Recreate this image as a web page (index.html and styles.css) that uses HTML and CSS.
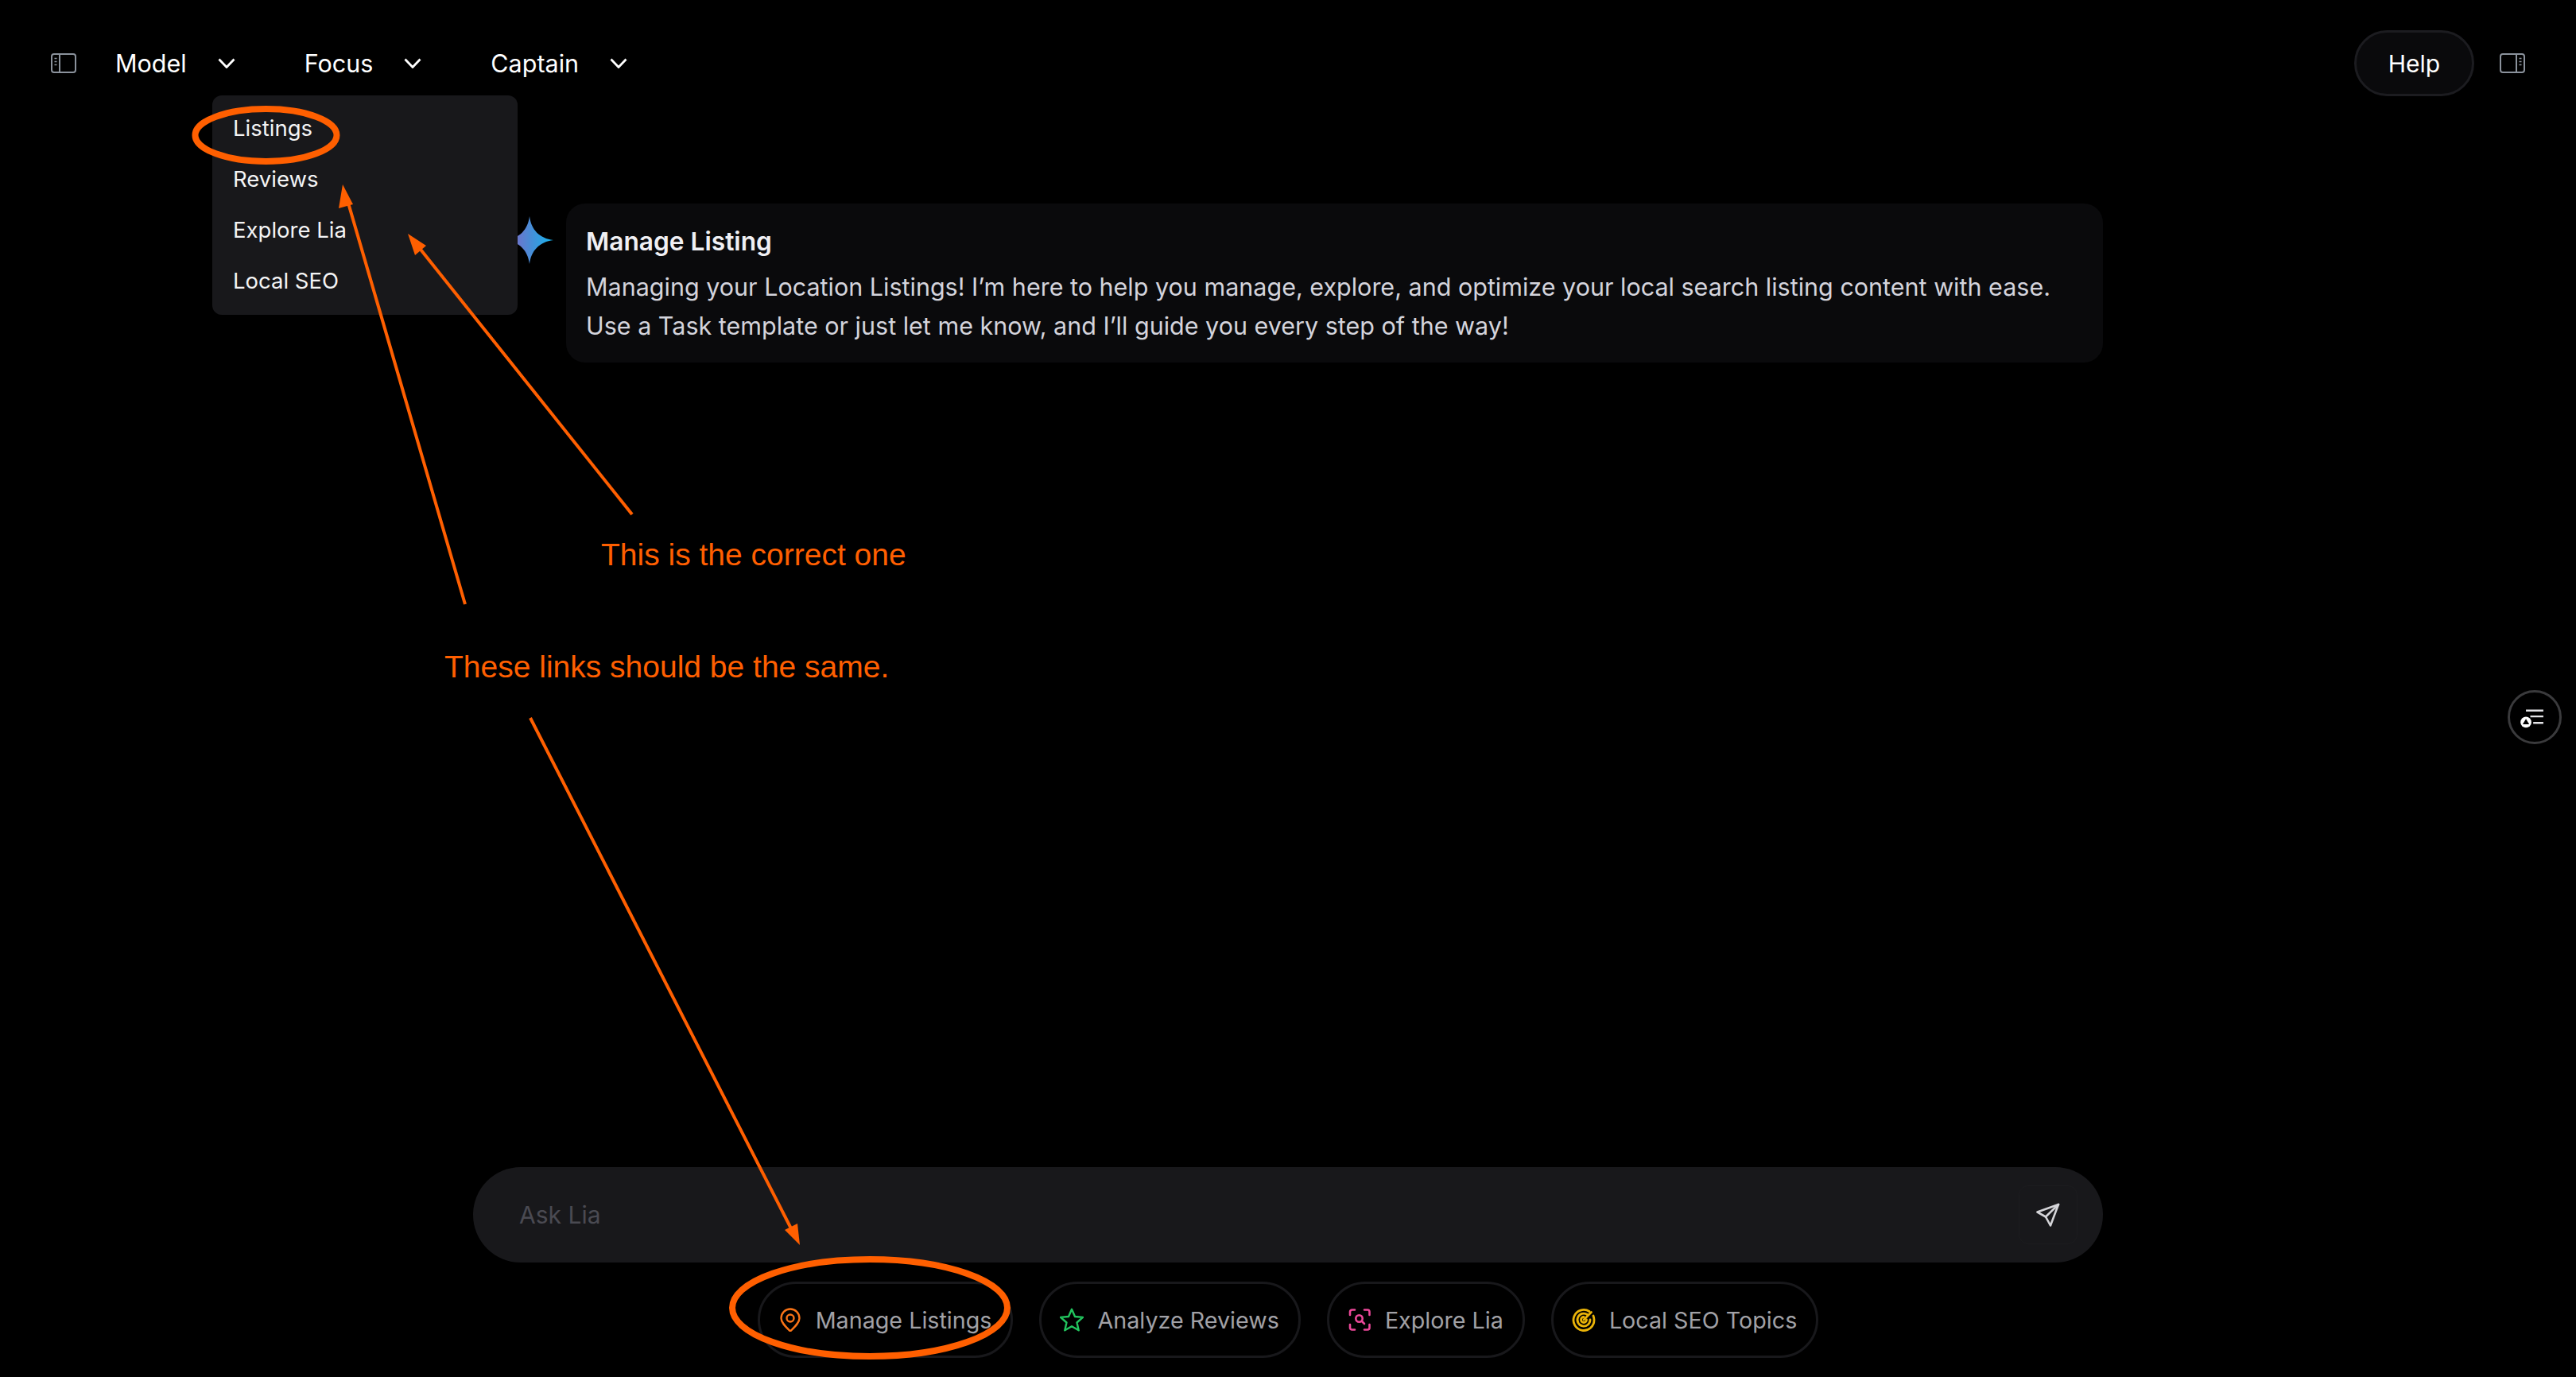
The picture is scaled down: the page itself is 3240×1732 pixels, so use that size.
FILE: index.html
```html
<!DOCTYPE html>
<html lang="en">
<head>
<meta charset="utf-8">
<title>Lia</title>
<link rel="stylesheet" href="styles.css">
</head>
<body>
<div class="page">
  <header class="topbar">
    <svg class="panel-icon" viewBox="0 0 32 25" fill="none" stroke="currentColor" stroke-width="2"><rect x="1" y="1" width="30" height="23" rx="3"/><path d="M11 1v23"/><path d="M4.5 6.5h3M4.5 10.5h3M4.5 14.500h3" stroke-width="1.600"/></svg>
    <nav class="nav">
      <a class="nav-item">Model<svg class="chev" viewBox="0 0 22 13" fill="none" stroke="currentColor" stroke-width="2.800"><path d="M1.500 1.500 11 11.500l9.500-10"/></svg></a>
      <a class="nav-item">Focus<svg class="chev" viewBox="0 0 22 13" fill="none" stroke="currentColor" stroke-width="2.800"><path d="M1.500 1.500 11 11.500l9.500-10"/></svg></a>
      <a class="nav-item">Captain<svg class="chev" viewBox="0 0 22 13" fill="none" stroke="currentColor" stroke-width="2.800"><path d="M1.500 1.500 11 11.500l9.500-10"/></svg></a>
    </nav>
    <div class="topbar-right">
      <button class="help">Help</button>
      <svg class="panel-icon" viewBox="0 0 32 25" fill="none" stroke="currentColor" stroke-width="2"><rect x="1" y="1" width="30" height="23" rx="3"/><path d="M21 1v23"/><path d="M24.500 6.500h3M24.500 10.500h3M24.500 14.500h3" stroke-width="1.600"/></svg>
    </div>
  </header>

  <main class="chat">
    <div class="message">
      <svg class="spark" viewBox="0 0 60 60"><defs><linearGradient id="sparkfill" x1="0" y1="0" x2="1" y2="0"><stop offset="0" stop-color="#8a62c4"/><stop offset="0.500" stop-color="#4b8bd6"/><stop offset="1" stop-color="#14b4ec"/></linearGradient></defs><path fill="url(#sparkfill)" d="M30 0C32 17 43 28 60 30 43 32 32 43 30 60 28 43 17 32 0 30 17 28 28 17 30 0Z"/></svg>
      <div class="bubble">
        <h2 class="bubble-title">Manage Listing</h2>
        <p class="bubble-text">Managing your Location Listings! I’m here to help you manage, explore, and optimize your local search listing content with ease.<br>Use a Task template or just let me know, and I’ll guide you every step of the way!</p>
      </div>
    </div>
  </main>

  <footer class="composer-wrap">
    <div class="composer">
      <span class="placeholder">Ask Lia</span>
      <button class="send"><svg viewBox="0 0 32 32" width="32" height="32" fill="none" stroke="#d4d4d8" stroke-width="2.600" stroke-linejoin="round" stroke-linecap="round"><path d="M29 3 2.500 12.500 13 18.500 19 29.500Z"/><path d="M29 3 13 18.500"/></svg></button>
    </div>
    <div class="chips">
      <a class="chip"><svg class="chip-icon" viewBox="0 0 30 30" fill="none" stroke="#f97316" stroke-width="2.400" stroke-linejoin="round"><path d="M15 29.500C9 23.500 3.500 18.500 3.500 13a11.500 11.500 0 0 1 23 0c0 5.500-5.500 10.500-11.500 16.500Z"/><circle cx="15" cy="13" r="4.500"/></svg>Manage Listings</a>
      <a class="chip"><svg class="chip-icon" viewBox="0 0 30 30" fill="none" stroke="#22c55e" stroke-width="2.400" stroke-linejoin="round"><path d="M15 1.800 19 11l10 .9-7.500 6.600 2.200 9.800L15 23.200 6.300 28.300l2.200-9.800L1 11.900 11 11Z"/></svg>Analyze Reviews</a>
      <a class="chip"><svg class="chip-icon" viewBox="0 0 30 30" fill="none" stroke="#ec4899" stroke-width="2.600" stroke-linecap="round"><path d="M3 9V5a2.500 2.500 0 0 1 2.500-2.500H9M21 2.500h4A2.500 2.500 0 0 1 27.500 5v4M27.500 21v4a2.500 2.500 0 0 1-2.500 2.500h-4M9 27.500H5.500A2.500 2.500 0 0 1 3 25v-4"/><circle cx="14.500" cy="13.500" r="4.200"/><path d="m18 17 3 3"/></svg>Explore Lia</a>
      <a class="chip"><svg class="chip-icon" viewBox="0 0 30 30" fill="none" stroke="#eab308" stroke-width="2.800" stroke-linecap="round"><path d="M22 4.500A13 13 0 1 0 28 15c0-2-.5-3.500-1-5"/><path d="M19.500 8.500A8 8 0 1 0 23 15"/><path d="M15 11.500a3.500 3.500 0 1 0 3.500 3.500"/><path d="M15 15 24.500 5.500"/></svg>Local SEO Topics</a>
    </div>
  </footer>

  <div class="menu">
    <a class="menu-item">Listings</a>
    <a class="menu-item">Reviews</a>
    <a class="menu-item">Explore Lia</a>
    <a class="menu-item">Local SEO</a>
  </div>

  <button class="side-fab">
    <svg viewBox="0 0 68 68" width="68" height="68"><path d="M22 25h24M28 33h18M32 42h14" stroke="#e4e4e7" stroke-width="2.600" fill="none"/><circle cx="22" cy="41" r="7.500" fill="#fff"/><path d="M22 36.500 26.500 44h-9Z" fill="#000"/></svg>
  </button>

  <svg class="marks" viewBox="0 0 3240 1732" fill="none" stroke="#ff5f00" stroke-width="4">
    <ellipse cx="334.500" cy="170" rx="89" ry="33" stroke-width="8"/>
    <ellipse cx="1094" cy="1645" rx="173" ry="61" stroke-width="8"/>
    <path d="M585 760 435 245"/>
    <path fill="#ff5f00" stroke="none" d="M431 232 444 257 426 262Z"/>
    <path d="M795 647 522 305"/>
    <path fill="#ff5f00" stroke="none" d="M513 294 536 309 522 321Z"/>
    <path d="M667 903 1000 1555"/>
    <path fill="#ff5f00" stroke="none" d="M1006 1566 987 1547 1003 1539Z"/>
  </svg>
  <div class="note note-correct">This is the correct one</div>
  <div class="note note-same">These links should be the same.</div>
</div>
</body>
</html>
```
FILE: styles.css
```css
* { box-sizing: border-box; }
html, body { margin: 0; height: 100%; background: #000; }
body { font-family: Inter, "Liberation Sans", sans-serif; color: #fff; overflow: hidden; }
a { display: block; }
button { font: inherit; }

.page { position: relative; width: 3240px; height: 1732px; display: flex; flex-direction: column; }

.topbar { display: flex; align-items: center; padding: 38px 64px 0; height: 121px; }
.panel-icon { width: 32px; height: 25px; color: #8b929c; flex: none; }
.nav { display: flex; align-items: center; margin-left: 49px; gap: 87px; }
.nav-item { display: flex; align-items: center; gap: 39px; font-size: 30.5px; line-height: 40px; color: #fff; }
.chev { width: 22px; height: 13px; }
.topbar-right { margin-left: auto; display: flex; align-items: center; gap: 32px; }
.help { width: 151px; height: 83px; border-radius: 42px; background: #0a0a0c; border: 3px solid #1c1c20; color: #fff; font-size: 30px; padding: 0; }

.chat { width: 2050px; margin: 135px auto 0; }
.message { display: flex; align-items: flex-start; gap: 16px; padding-left: 41px; }
.spark { width: 60px; height: 60px; margin-top: 16px; flex: none; }
.bubble { flex: 1; height: 200px; background: #0a0a0c; border-radius: 24px; padding: 24px 25px; }
.bubble-title { margin: 0 0 8px; font-size: 31.7px; line-height: 48px; font-weight: 600; color: #f0f0f4; }
.bubble-text { margin: 0; font-size: 30.5px; line-height: 49px; color: #d4d4dc; }

.composer-wrap { margin-top: auto; padding-bottom: 24px; display: flex; flex-direction: column; align-items: center; gap: 24px; }
.composer { width: 2050px; height: 120px; border-radius: 60px; background: #18181b; display: flex; align-items: center; justify-content: space-between; padding: 0 32px 0 58px; }
.placeholder { font-size: 30px; color: #4a4a52; }
.send { width: 74px; height: 74px; background: transparent; border: 1px solid #1c1c1f; border-radius: 12px; display: flex; align-items: center; justify-content: center; padding: 0; }

.chips { display: flex; gap: 33px; }
.chip { display: flex; align-items: center; height: 96px; padding: 0 24px 0 23px; gap: 17px; border: 3px solid #18181b; border-radius: 48px; font-size: 28.7px; color: #a1a1a6; }
.chip-icon { width: 30px; height: 30px; flex: none; }

.menu { position: absolute; left: 267px; top: 120px; width: 384px; height: 276px; padding: 9px 26px 11px; background: #18181b; border-radius: 12px; }
.menu-item { height: 64px; line-height: 64px; font-size: 27.5px; color: #f4f4f5; }

.side-fab { position: absolute; left: 3154px; top: 868px; width: 68px; height: 68px; padding: 0; border-radius: 50%; background: #000; border: 3px solid #3a3a3c; display: flex; align-items: center; justify-content: center; }

.marks { position: absolute; inset: 0; width: 3240px; height: 1732px; pointer-events: none; }
.note { position: absolute; font-family: "Liberation Sans", Arial, sans-serif; font-size: 39px; line-height: 46px; color: #ff5f00; white-space: nowrap; }
.note-correct { left: 756px; top: 675px; }
.note-same { left: 559px; top: 816px; }
```
